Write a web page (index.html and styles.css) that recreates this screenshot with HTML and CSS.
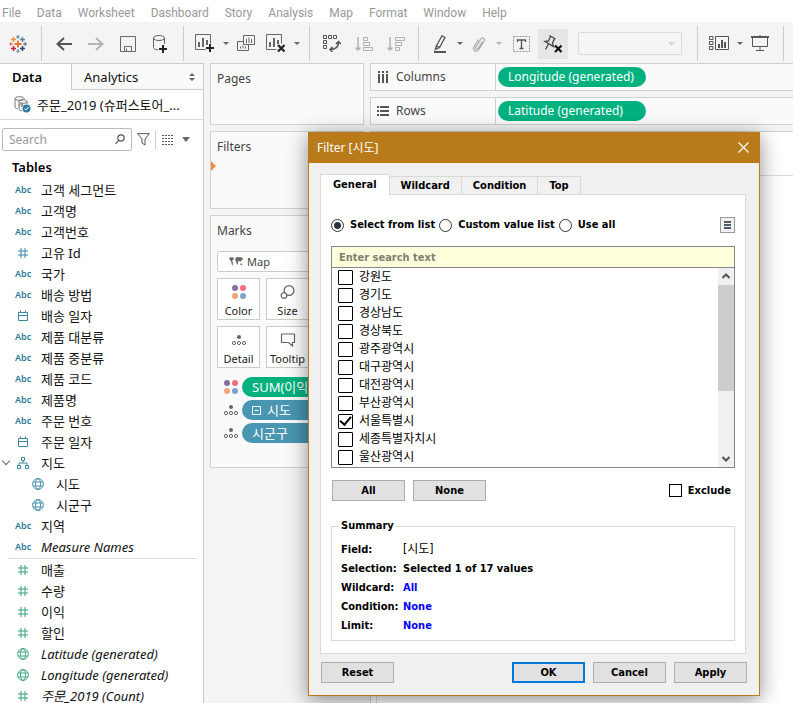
FILE: index.html
```html
<!DOCTYPE html>
<html lang="en">
<head>
<meta charset="utf-8">
<title>Filter [시도]</title>
<link rel="stylesheet" href="styles.css">
</head>
<body>
<svg class="defs" aria-hidden="true">
  <symbol id="hash" viewBox="0 0 12 12"><path d="M4 1v10M8 1v10M1 4h10M1 8h10"/></symbol>
  <symbol id="cal" viewBox="0 0 12 12"><path d="M1.5 2.5h9v8h-9zM1.5 5.5h9M3.5 .5v2M8.500 .5v2"/></symbol>
  <symbol id="globe" viewBox="0 0 12 12"><g stroke-width=".9"><circle cx="6" cy="6" r="5.400"/><ellipse cx="6" cy="6" rx="2.500" ry="5.400"/><path d="M1 4h10M1 8h10"/></g></symbol>
  <symbol id="tree" viewBox="0 0 12 12"><path d="M4.500 .5h3v3h-3zM.5 8.500h3v3h-3zM8.500 8.500h3v3h-3zM6 3.500v2.500M2 8.500V6h8v2.500"/></symbol>
  <symbol id="dots" viewBox="0 0 16 14"><circle cx="4" cy="3" r="3" fill="#876f9c"/><circle cx="12" cy="3" r="3" fill="#f66c7e"/><circle cx="4" cy="11" r="3" fill="#f1a47a"/><circle cx="12" cy="11" r="3" fill="#7aa3cc"/></symbol>
  <symbol id="detail" viewBox="0 0 16 12"><circle cx="8" cy="3" r="2" fill="#666"/><g fill="none" stroke="#666"><circle cx="3" cy="9" r="1.600"/><circle cx="8" cy="9" r="1.600"/><circle cx="13" cy="9" r="1.600"/></g></symbol>
</svg>

<div class="app">
  <nav class="menu">
    <a href="#">File</a><a href="#">Data</a><a href="#">Worksheet</a><a href="#">Dashboard</a><a href="#">Story</a><a href="#">Analysis</a><a href="#">Map</a><a href="#">Format</a><a href="#">Window</a><a href="#">Help</a>
  </nav>

  <div class="toolbar">
    <div class="group group-logo">
      <button class="tool" aria-label="Start page"><svg width="18" height="18" viewBox="0 0 18 18" fill="none" stroke-width="1.500">
        <path stroke="#e8762d" stroke-width="1.800" d="M9 5.500v7M5.500 9h7"/>
        <path stroke="#e8912d" d="M4.500 2v5M2 4.500h5"/><path stroke="#5b879b" d="M13.500 2v5M11 4.500h5"/>
        <path stroke="#c72035" d="M4.500 11v5M2 13.500h5"/><path stroke="#1f447e" d="M13.500 11v5M11 13.500h5"/>
        <path stroke="#5b9aa8" stroke-width="1.200" d="M9 0v4M7.200 1.800h3.600"/><path stroke="#7199a6" stroke-width="1.200" d="M9 14v4M7.200 16.200h3.600"/>
        <path stroke="#e2656b" stroke-width="1.200" d="M0 9h4M1.800 7.200v3.600"/><path stroke="#5a6591" stroke-width="1.200" d="M14 9h4M16.200 7.200v3.600"/></svg></button>
    </div>
    <div class="group group-history">
      <button class="tool wide" aria-label="Undo"><svg width="16" height="14" viewBox="0 0 16 14" fill="none" stroke="#555" stroke-width="2"><path d="M16 7H2M8 1L1.500 7 8 13"/></svg></button>
      <button class="tool wide" aria-label="Redo"><svg width="16" height="14" viewBox="0 0 16 14" fill="none" stroke="#b4b4b4" stroke-width="2"><path d="M0 7h14M8 1l6.500 6L8 13"/></svg></button>
      <button class="tool wide" aria-label="Save"><svg width="16" height="16" viewBox="0 0 16 16" fill="none" stroke="#666"><path d="M.5 .5h15v15H.5z"/><path d="M4.500 15.500v-5h7v5M6.500 15v-2.500"/></svg></button>
      <button class="tool wide" aria-label="New data source"><svg width="16" height="18" viewBox="0 0 16 18" fill="none" stroke="#666"><ellipse cx="7" cy="3" rx="5.500" ry="2.500"/><path d="M1.500 3v9.500c0 1.500 2 2.300 4.500 2.300M12.500 3v6"/><path stroke="#222" stroke-width="2" d="M11 10v8M7 14h8"/></svg></button>
    </div>
    <div class="group group-sheets">
      <button class="tool" aria-label="New worksheet"><svg width="20" height="19" viewBox="0 0 20 19" fill="none" stroke="#666"><path d="M10.500 15.500H.5V.5h15v9"/><path stroke-width="2" d="M4 13V8M8 13V4M12 11V6"/><path stroke="#222" stroke-width="2" d="M15 10v8M11 14h8"/></svg></button>
      <button class="caret" aria-label="New worksheet options"></button>
      <button class="tool" aria-label="Duplicate"><svg width="18" height="17" viewBox="0 0 18 17" fill="none" stroke="#666"><path d="M6.500 .5h11v9h-11zM6.500 6.500h-6v9h11v-6"/><path d="M9.500 8V4M12 8V2.500M14.500 8V4M3.500 13.500v-2M6 13.500v-3M8.500 13.500v-2"/></svg></button>
      <button class="tool" aria-label="Clear sheet"><svg width="20" height="19" viewBox="0 0 20 19" fill="none" stroke="#666"><path d="M10.500 15.500H.5V.5h15v9"/><path stroke-width="2" d="M4 13V8M8 13V4M12 10V6"/><path stroke="#222" stroke-width="2.200" d="M12 11l6.500 6.500M18.500 11L12 17.500"/></svg></button>
      <button class="caret" aria-label="Clear options"></button>
    </div>
    <div class="group group-sort">
      <button class="tool wide" aria-label="Swap rows and columns"><svg width="18" height="17" viewBox="0 0 18 17" fill="none" stroke="#555"><path d="M.5 .5h3v3h-3zM5.500 .5h3v3h-3zM10.500 .5h3v3h-3zM.5 5.500h3v3h-3zM.5 10.500h3v3h-3z"/><path stroke-width="1.500" d="M15.500 7c0 5-3 7.500-8.500 7.500M13 9l2.500-2.500L18 9M9.500 12L7 14.500 9.500 17"/></svg></button>
      <button class="tool wide" aria-label="Sort ascending"><svg width="18" height="16" viewBox="0 0 18 16" fill="none" stroke="#b0b0b0"><path stroke-width="1.500" d="M3 1v13M.5 11.500L3 14l2.500-2.500"/><path d="M8.500 1.500h4v3h-4zM8.500 6.500h6v3h-6zM8.500 11.500h9v3h-9z"/></svg></button>
      <button class="tool wide" aria-label="Sort descending"><svg width="18" height="16" viewBox="0 0 18 16" fill="none" stroke="#b0b0b0"><path stroke-width="1.500" d="M3 1v13M.5 11.500L3 14l2.500-2.500"/><path d="M8.500 1.500h9v3h-9zM8.500 6.500h6v3h-6zM8.500 11.500h4v3h-4z"/></svg></button>
    </div>
    <div class="group group-format">
      <button class="tool tight" aria-label="Highlight"><svg width="14" height="18" viewBox="0 0 14 18" fill="none" stroke="#555"><path stroke-width="1.300" d="M9 .8l3 1.700-5.500 10-3-1.700zM3.500 10.800l-1.200 3.700 4.200-2"/><path stroke-width="2" d="M1 17h12"/></svg></button>
      <button class="caret" aria-label="Highlight options"></button>
      <button class="tool tight" aria-label="Group members"><svg width="14" height="16" viewBox="0 0 14 16" fill="none" stroke="#aaa" stroke-width="1.200"><path d="M10.500 5.500L6 12.500c-1 1.500-3 .3-2.200-1.200L9 3c1.500-2.300 4.500-.5 3.200 2L6.500 14c-2 2.600-6 .3-4.700-2.700L6.500 3.500"/></svg></button>
      <button class="caret faded" aria-label="Group options"></button>
      <button class="tool" aria-label="Show mark labels"><svg width="17" height="16" viewBox="0 0 17 16" fill="none" stroke="#999"><path stroke-dasharray="2 1" d="M.5 .5h16v15H.5z"/><path stroke="#555" stroke-width="1.300" d="M4.500 6V4h8v2M8.500 4v8.500M6.500 12.500h4"/></svg></button>
      <button class="tool active" aria-label="Unfix axes"><svg width="20" height="20" viewBox="0 0 20 20" fill="none" stroke="#444" stroke-width="1.300"><path d="M6.500 1.500l6 3.500M7.500 2.500L5.500 7 2 7.500l8.500 5L9.500 9l2-4.500M5.500 10L2.500 15.500"/><path stroke="#111" stroke-width="2.200" d="M12 11.500l6.500 6.500M18.500 11.500L12 18"/></svg></button>
      <select class="fit" aria-label="Fit" disabled></select>
    </div>
    <div class="group group-show">
      <button class="tool" aria-label="Show cards"><svg width="20" height="15" viewBox="0 0 20 15" fill="none" stroke="#555"><path d="M.5 .5h3.500v3H.5zM.5 5.500h3.500v3H.5zM.5 10.500h3.500v3H.5zM6.500 .5h13v13h-13z"/><path stroke-width="2" d="M10 12V8M13 12V4M16 12V6"/></svg></button>
      <button class="caret" aria-label="Card options"></button>
      <button class="tool" aria-label="Presentation mode"><svg width="18" height="17" viewBox="0 0 18 17" fill="none" stroke="#555"><path stroke-width="2" d="M0 2h18"/><path d="M1.500 3v8.500h15V3M9 0v2M9 11.500v4M5 15.500h8"/></svg></button>
    </div>
  </div>

  <main class="work">
    <aside class="data-pane">
      <div class="pane-tabs">
        <button class="pane-tab current">Data</button>
        <button class="pane-tab other">Analytics<svg width="6" height="8" viewBox="0 0 6 8" fill="#5c6a78"><path d="M3 0l3 3H0zM3 8L0 5h6z"/></svg></button>
      </div>
      <div class="source">
        <svg width="17" height="17" viewBox="0 0 17 17" fill="none" stroke="#777"><ellipse cx="5.500" cy="2.500" rx="4.500" ry="1.800"/><path d="M1 2.500V11c0 1 1 1.500 2.500 1.800"/><ellipse cx="9" cy="5.500" rx="4" ry="1.800"/><path d="M5 5.500V13c0 1 1.500 1.700 3 1.700M13 5.500V8M4.500 9h4M7 7l2 2-2 2"/><circle cx="12.500" cy="12.500" r="4" fill="#2f7e9e" stroke="none"/><path stroke="#fff" d="M10.500 12.500l1.500 1.500 2.500-3"/></svg>
        <span>주문_2019 (슈퍼스토어_...</span>
      </div>
      <div class="search-row">
        <div class="search">
          <input type="text" placeholder="Search" aria-label="Search fields">
          <svg width="10" height="11" viewBox="0 0 10 11" fill="none" stroke="#555" stroke-width="1.200"><circle cx="6" cy="4" r="3.200"/><path d="M3.700 6.300L.5 9.800"/></svg>
        </div>
        <button class="plain" aria-label="Filter fields"><svg width="13" height="13" viewBox="0 0 13 13" fill="none" stroke="#555"><path d="M.7 .6h11.600L8 6v6L5 10V6z"/></svg></button>
        <button class="plain view-as" aria-label="View as"><svg width="13" height="10" viewBox="0 0 13 10" stroke="#555"><path d="M0 .5h12M0 3.500h12M0 6.500h12M0 9.500h12" stroke-dasharray="2 1"/></svg></button>
        <button class="caret big" aria-label="View options"></button>
      </div>
      <h2>Tables</h2>
      <ul class="fields">
        <li><i>Abc</i>고객 세그먼트</li>
        <li><i>Abc</i>고객명</li>
        <li><i>Abc</i>고객번호</li>
        <li><svg><use href="#hash"/></svg>고유 Id</li>
        <li><i>Abc</i>국가</li>
        <li><i>Abc</i>배송 방법</li>
        <li><svg><use href="#cal"/></svg>배송 일자</li>
        <li><i>Abc</i>제품 대분류</li>
        <li><i>Abc</i>제품 중분류</li>
        <li><i>Abc</i>제품 코드</li>
        <li><i>Abc</i>제품명</li>
        <li><i>Abc</i>주문 번호</li>
        <li><svg><use href="#cal"/></svg>주문 일자</li>
        <li class="open"><svg><use href="#tree"/></svg>지도</li>
        <li class="child"><svg><use href="#globe"/></svg>시도</li>
        <li class="child"><svg><use href="#globe"/></svg>시군구</li>
        <li><i>Abc</i>지역</li>
        <li><i>Abc</i><em>Measure Names</em></li>
      </ul>
      <ul class="fields measures">
        <li><svg><use href="#hash"/></svg>매출</li>
        <li><svg><use href="#hash"/></svg>수량</li>
        <li><svg><use href="#hash"/></svg>이익</li>
        <li><svg><use href="#hash"/></svg>할인</li>
        <li><svg><use href="#globe"/></svg><em>Latitude (generated)</em></li>
        <li><svg><use href="#globe"/></svg><em>Longitude (generated)</em></li>
        <li><svg><use href="#hash"/></svg><em>주문_2019 (Count)</em></li>
      </ul>
    </aside>

    <section class="cards">
      <div class="card pages"><h3>Pages</h3></div>
      <div class="card filters"><h3>Filters</h3><span class="drop-mark"></span></div>
      <div class="card marks">
        <h3>Marks</h3>
        <div class="mark-type">
          <svg width="14" height="9" viewBox="0 0 14 9" fill="#666"><path d="M0 1l3-1 2 1-1 2-1 1 1 1.500L3.500 9 2.500 7V5L1 3zM6 2l2-2 5 .5 1 1.500-2 2-1 1-1-1.500-1 1V8L8 7 7 4.500zM11.500 6.500l1.500 0v1.500h-1.500z"/></svg>
          <select aria-label="Mark type"><option>Map</option></select>
        </div>
        <div class="mark-grid">
          <button><svg width="16" height="14"><use href="#dots"/></svg>Color</button>
          <button><svg width="16" height="14" viewBox="0 0 16 14" fill="none" stroke="#666" stroke-width="1.200"><circle cx="9" cy="5.500" r="4.900"/><circle cx="4" cy="10.500" r="2.800" fill="#fff"/></svg>Size</button>
          <button><svg width="16" height="14"><use href="#detail"/></svg>Detail</button>
          <button><svg width="16" height="14" viewBox="0 0 16 14" fill="none" stroke="#666" stroke-width="1.200"><path d="M1.500 1h13v8.500h-2V13L8.500 9.500h-7z"/></svg>Tooltip</button>
        </div>
        <div class="encodings">
          <div><svg width="16" height="14"><use href="#dots"/></svg><span class="pill measure">SUM(이익)</span></div>
          <div><svg width="16" height="14"><use href="#detail"/></svg><span class="pill dim"><svg width="9" height="9" viewBox="0 0 9 9" fill="none" stroke="#fff"><path d="M.5 .5h8v8h-8zM2.500 4.500h4"/></svg>시도</span></div>
          <div><svg width="16" height="14"><use href="#detail"/></svg><span class="pill dim">시군구</span></div>
        </div>
      </div>
    </section>

    <section class="view">
      <div class="shelf">
        <div class="shelf-name"><svg width="12" height="12" viewBox="0 0 12 12" stroke="#555" stroke-width="2"><path d="M2 0v2M2 3v9M6 0v2M6 3v9M10 0v2M10 3v9"/></svg>Columns</div>
        <span class="pill measure">Longitude (generated)</span>
      </div>
      <div class="shelf">
        <div class="shelf-name"><svg width="12" height="12" viewBox="0 0 12 12" stroke="#555" stroke-width="2"><path d="M0 2h2M3 2h9M0 6h2M3 6h9M0 10h2M3 10h9"/></svg>Rows</div>
        <span class="pill measure">Latitude (generated)</span>
      </div>
      <div class="sheet">
        <div class="sheet-title"></div>
        <div class="canvas"></div>
      </div>
    </section>
  </main>
</div>

<div class="dialog" role="dialog" aria-labelledby="dialog-title">
  <header>
    <span id="dialog-title">Filter [시도]</span>
    <button class="close" aria-label="Close"><svg width="11" height="11" viewBox="0 0 11 11" stroke="#fff" stroke-width="1.200"><path d="M.5 .5l10 10M10.500 .5l-10 10"/></svg></button>
  </header>
  <div class="tabs">
    <button class="tab selected">General</button><button class="tab">Wildcard</button><button class="tab">Condition</button><button class="tab">Top</button>
  </div>
  <div class="panel">
    <div class="modes">
      <label><input type="radio" name="mode" checked>Select from list</label>
      <label><input type="radio" name="mode">Custom value list</label>
      <label><input type="radio" name="mode">Use all</label>
      <button class="options" aria-label="List options"><svg width="7" height="8" viewBox="0 0 7 8" stroke="#4d5b69" stroke-width="2"><path d="M0 1h7M0 4h7M0 7h7"/></svg></button>
    </div>
    <div class="list-box">
      <input class="list-search" type="text" placeholder="Enter search text" aria-label="Enter search text">
      <div class="list-body">
        <div class="values">
          <label><input type="checkbox">강원도</label>
          <label><input type="checkbox">경기도</label>
          <label><input type="checkbox">경상남도</label>
          <label><input type="checkbox">경상북도</label>
          <label><input type="checkbox">광주광역시</label>
          <label><input type="checkbox">대구광역시</label>
          <label><input type="checkbox">대전광역시</label>
          <label><input type="checkbox">부산광역시</label>
          <label><input type="checkbox" checked>서울특별시</label>
          <label><input type="checkbox">세종특별자치시</label>
          <label><input type="checkbox">울산광역시</label>
        </div>
        <div class="scrollbar">
          <svg width="8" height="6" viewBox="0 0 8 6" fill="none" stroke="#555" stroke-width="2"><path d="M.5 5L4 1.500 7.500 5"/></svg>
          <div class="thumb"></div>
          <svg width="8" height="6" viewBox="0 0 8 6" fill="none" stroke="#555" stroke-width="2"><path d="M.5 1L4 4.500 7.500 1"/></svg>
        </div>
      </div>
    </div>
    <div class="list-actions">
      <button class="btn">All</button>
      <button class="btn">None</button>
      <label class="exclude"><input type="checkbox">Exclude</label>
    </div>
    <fieldset>
      <legend>Summary</legend>
      <dl>
        <dt>Field:</dt><dd class="field-name">[시도]</dd>
        <dt>Selection:</dt><dd>Selected 1 of 17 values</dd>
        <dt>Wildcard:</dt><dd><a href="#">All</a></dd>
        <dt>Condition:</dt><dd><a href="#">None</a></dd>
        <dt>Limit:</dt><dd><a href="#">None</a></dd>
      </dl>
    </fieldset>
  </div>
  <footer>
    <button class="btn reset">Reset</button>
    <button class="btn primary">OK</button>
    <button class="btn">Cancel</button>
    <button class="btn">Apply</button>
  </footer>
</div>
</body>
</html>
```
FILE: styles.css
```css
* { box-sizing: border-box; }

body {
  margin: 0;
  font: 12px/16px "Noto Sans", "Noto Sans CJK KR", sans-serif;
  color: #111;
  background: #fff;
  overflow: hidden;
}

button, input, select { font: inherit; color: inherit; margin: 0; padding: 0; }
button { border: 0; background: none; }
a { color: inherit; text-decoration: none; }
h2, h3, ul, dl, dd { margin: 0; padding: 0; }
svg { flex: none; }
.defs { position: absolute; width: 0; height: 0; }

.app { display: flex; flex-direction: column; height: 100vh; }

/* Menu and toolbar */
.menu { display: flex; gap: 16px; height: 22px; padding: 5px 2px 0; color: #999; font-family: Roboto, sans-serif; }

.toolbar { display: flex; height: 41px; padding: 4px 0 2px; background: #f4f4f4; }
.group { display: flex; align-items: center; border-right: 1px solid #ccc; }
.group-logo { padding: 0 8px 0 3px; }
.group-history { padding: 0 7px 0 6px; }
.group-sheets { padding: 0 7px 0 6px; }
.group-sort { padding: 0 6px; }
.group-format { gap: 2px; padding: 0 15px 0 9px; }
.group-show { padding: 0 8px 0 6px; }
.tool { display: flex; align-items: center; justify-content: center; width: 30px; height: 30px; }
.tool.wide { width: 32px; }
.tool.tight { width: 24px; }
.tool.active { background: #e6e6e6; }
.caret { display: flex; align-items: center; justify-content: center; width: 11px; height: 23px; }
.caret::before { content: ""; border: solid transparent; border-width: 3px 3px 0; border-top-color: #666; }
.caret.faded::before { border-top-color: #b4b4b4; }
.fit {
  width: 104px; height: 23px; margin-left: 8px;
  appearance: none; border: 1px solid #d0d0d0; border-radius: 2px;
  background: linear-gradient(to bottom right, #ccc 50%, transparent 50%) no-repeat right 5px center / 4px 4px, linear-gradient(to bottom left, #ccc 50%, transparent 50%) no-repeat right 9px center / 4px 4px, #f6f6f6;
}

/* Data pane */
.work { display: flex; flex: 1; min-height: 0; background: #f4f4f4; }
.data-pane { width: 204px; flex: none; overflow: hidden; background: #fff; border-right: 1px solid #ccc; }
.pane-tabs { display: flex; height: 27px; border-top: 1px solid #ccc; font-size: 13px; }
.pane-tab { text-align: left; padding-left: 12px; }
.current { width: 71px; font-weight: 600; color: #000; }
.other { display: flex; flex: 1; align-items: center; justify-content: space-between; padding-right: 8px; background: #fafafa; border: solid #ccc; border-width: 0 0 1px 1px; }
.source { display: flex; align-items: center; gap: 6px; height: 30px; padding-left: 14px; border-bottom: 1px solid #ddd; font-size: 13px; white-space: nowrap; }
.search-row { display: flex; align-items: center; gap: 5px; padding: 8px 12px 0 2px; }
.search { display: flex; align-items: center; width: 130px; height: 23px; padding: 0 6px; border: 1px solid #bbb; border-radius: 2px; }
.search input { flex: 1; min-width: 0; border: 0; outline: 0; background: none; font-size: 12px; }
.search input::placeholder { color: #999; }
.plain { display: flex; align-items: center; height: 18px; }
.view-as { padding-left: 6px; border-left: 1px solid #ccc; }
.caret.big::before { border-width: 5px 4px 0; }
.data-pane h2 { padding: 7px 12px 3px; font-size: 13px; line-height: 18px; font-weight: 600; color: #000; }

.fields { list-style: none; color: #111; }
.fields li { position: relative; display: flex; align-items: center; height: 21px; padding-left: 15px; font-size: 13px; white-space: nowrap; }
.fields i { width: 26px; font: 600 9px/12px "Noto Sans", sans-serif; color: #2d7a99; }
.fields svg { width: 12px; height: 12px; margin: 0 12px 0 2px; fill: none; stroke: #3b86a3; }
.fields .child { padding-left: 30px; }
.fields .open::before { content: ""; position: absolute; left: 3px; top: 6px; width: 5px; height: 5px; border: solid #666; border-width: 0 1px 1px 0; transform: rotate(45deg); }
.fields.measures { margin: 1px 6px 0 9px; border-top: 1px solid #ddd; }
.measures li { padding-left: 6px; }
.measures svg { stroke: #35a177; }

/* Cards */
.cards { display: flex; flex-direction: column; gap: 6px; flex: none; width: 154px; margin-left: 6px; color: #444; }
.card { position: relative; padding: 7px 6px; background: #fafafa; border: 1px solid #d0d0d0; }
.card h3 { font-size: 12px; line-height: 16px; font-weight: 400; }
.pages { height: 62px; }
.filters { height: 78px; }
.marks { height: 253px; }
.drop-mark { position: absolute; left: 0; top: 29px; border: solid transparent; border-width: 5px 0 5px 5px; border-left-color: #ed8b4a; }
.mark-type { display: flex; align-items: center; gap: 4px; height: 21px; margin-top: 12px; padding-left: 11px; background: #fff; border: 1px solid #ccc; border-radius: 2px; font-size: 11px; }
.mark-type select { flex: 1; appearance: none; border: 0; background: none; }
.mark-grid { display: grid; grid-template-columns: repeat(2, 43px); gap: 6px; margin-top: 6px; }
.mark-grid button { display: flex; flex-direction: column; align-items: center; gap: 5px; height: 42px; padding-top: 6px; line-height: 14px; font-size: 11px; background: #fff; border: 1px solid #ccc; color: #222; }
.encodings { display: flex; flex-direction: column; gap: 3px; margin-top: 9px; }
.encodings div { display: flex; align-items: center; gap: 3px; padding-left: 6px; }
.pill { display: flex; align-items: center; gap: 6px; height: 20px; padding: 0 10px; border-radius: 10px; color: #fff; font-size: 12px; white-space: nowrap; }
.encodings .pill { flex: 1; font-size: 13px; }
.measure { background: #00b180; }
.dim { background: #4996b2; }

/* Shelves and sheet */
.view { display: flex; flex-direction: column; gap: 6px; flex: 1; min-width: 0; margin-left: 6px; }
.shelf { display: flex; align-items: center; height: 28px; background: #fafafa; border: solid #d0d0d0; border-width: 1px 0 1px 1px; }
.shelf .pill { width: 148px; margin-left: 2px; }
.shelf-name { display: flex; align-items: center; gap: 7px; width: 125px; height: 26px; padding-left: 6px; color: #444; border-right: 1px solid #d0d0d0; }
.sheet { display: flex; flex-direction: column; flex: 1; background: #fff; border: solid #d0d0d0; border-width: 1px 0 0 1px; }
.sheet-title { height: 43px; }
.canvas { flex: 1; margin-left: 5px; border: solid #ddd; border-width: 1px 0 0 1px; }

/* Filter dialog */
.dialog {
  position: absolute; left: 308px; top: 132px; width: 452px;
  background: #f0f0f0; border: 1px solid #b97c1c; border-top: 0;
  box-shadow: 0 4px 20px rgba(0, 0, 0, .45);
  font: 700 11px/16px "DejaVu Sans Condensed", "Noto Sans", "Noto Sans CJK KR", sans-serif; color: #000;
}
.dialog header { display: flex; align-items: center; justify-content: space-between; height: 31px; padding: 0 10px 0 8px; background: #b97a1a; color: #fff; font: 400 12px/16px "Noto Sans", "Noto Sans CJK KR", sans-serif; }
.close { display: flex; }
.tabs { display: flex; align-items: flex-end; height: 31px; padding: 0 11px; }
.tab { height: 18px; padding: 0 11px; border: 1px solid #d9d9d9; border-width: 1px 1px 0 0; background: #f0f0f0; }
.tab.selected { z-index: 1; height: 21px; margin-bottom: -1px; padding: 0 12px; border-left-width: 1px; background: #fff; }
.panel { margin: 0 13px 0 11px; padding: 22px 10px 12px; background: #fff; border: 1px solid #d9d9d9; }
.modes { display: flex; align-items: center; gap: 4px; height: 16px; white-space: nowrap; }
.modes label, .exclude { display: flex; align-items: center; gap: 6px; }
.modes input { appearance: none; width: 13px; height: 13px; border: 1px solid #333; border-radius: 50%; background: #fff; }
.modes input:checked { background: radial-gradient(#2b333b 3px, #fff 4px); }
.options { display: flex; align-items: center; justify-content: center; width: 15px; height: 16px; margin-left: auto; border: 1px solid #999; background: #f0f0f0; }
.list-box { margin-top: 13px; border: 1px solid #828790; }
.list-search { display: block; width: 100%; height: 21px; padding: 0 7px; border: 0; border-bottom: 1px solid #828790; outline: 0; background: #ffffdc; font-weight: 700; }
.list-search::placeholder { color: #808070; }
.list-body { display: flex; justify-content: space-between; }
.values { flex: 1; padding: 0 6px 1px; font-weight: 400; font-size: 12px; }
.values label { display: flex; align-items: center; gap: 6px; height: 18px; }
.dialog input[type="checkbox"] { appearance: none; width: 15px; height: 15px; border: 1px solid #000; background: #fff; }
.values input { border-radius: 1px; }
.values input:checked { display: grid; place-items: center; }
.values input:checked::before { content: ""; width: 5px; height: 9px; margin-top: -3px; border: solid #000; border-width: 0 2px 2px 0; transform: rotate(40deg); }
.scrollbar { display: flex; flex-direction: column; align-items: center; width: 16px; padding: 5px 0; background: #f0f0f0; }
.thumb { width: 16px; height: 106px; margin: 6px 0 auto; background: #cdcdcd; }
.list-actions { display: flex; align-items: center; gap: 8px; margin-top: 12px; padding: 0 4px 0 1px; }
.btn { width: 73px; height: 21px; border: 1px solid #adadad; background: #e1e1e1; }
.btn.primary { border: 2px solid #0078d7; }
.exclude { margin-left: auto; }
.dialog .exclude input { width: 13px; height: 13px; }
fieldset { margin: 17px 0 0; padding: 6px 9px 5px; border: 1px solid #d9d9d9; }
legend { padding: 0 2px; margin-left: -2px; }
dl { display: grid; grid-template-columns: 62px 1fr; line-height: 19px; }
.field-name { font-weight: 400; font-size: 12px; }
dd a { color: #00f; }
footer { display: flex; gap: 8px; padding: 8px 12px 12px; }
.reset { margin-right: auto; }
```
